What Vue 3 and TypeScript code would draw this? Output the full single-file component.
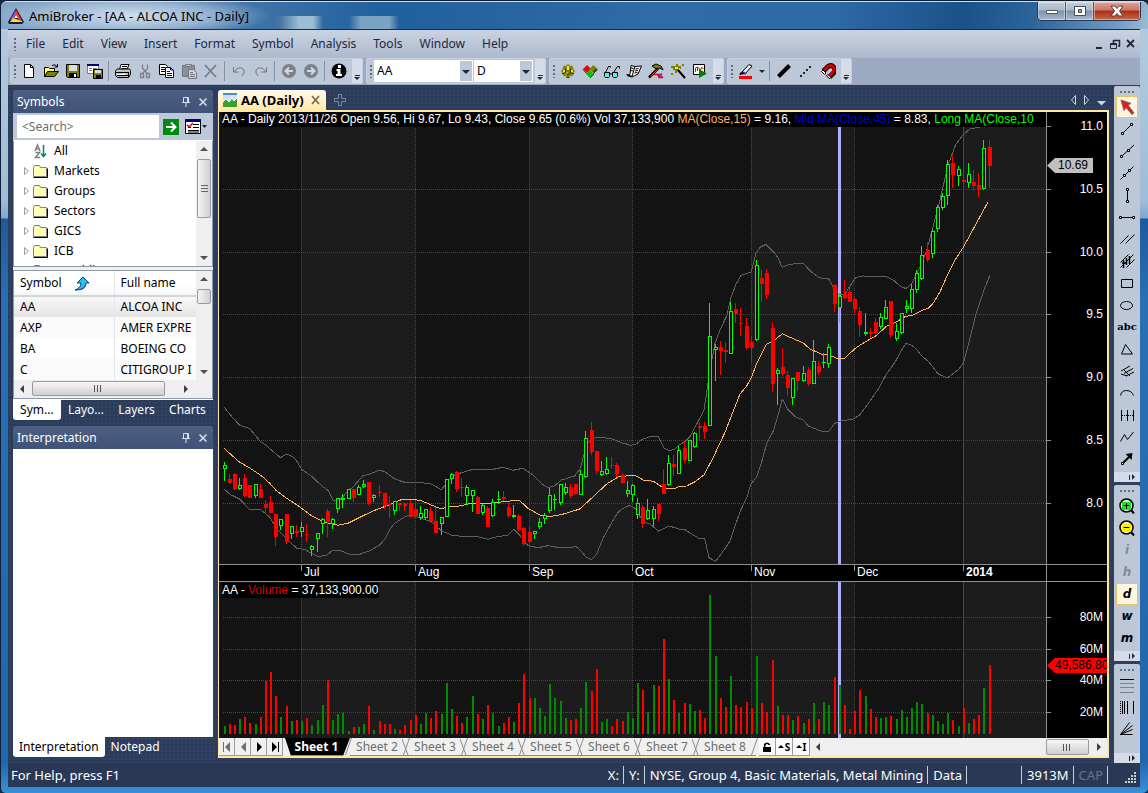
<script setup lang="ts">
import { ref } from 'vue'

interface Shape { d: string; f?: string; s?: string; w?: number; dash?: string }
interface Candle { x: number; up: boolean; hi: number; top: number; bot: number; lo: number }

const K = '#000'
const O = '#808000'
const GY = '#7d8088'

const icons: Record<string, Shape[]> = {
  new: [{ d: 'M3.5 1.5h6l3 3v10h-9z', f: '#fff', s: K }, { d: 'M9.5 1.5v3h3', s: K }],
  open: [{ d: 'M1.5 13.5v-9h4l1 1h5v3', f: '#ffff80', s: K }, { d: 'M1.5 13.5l3-5h11l-4 5z', f: O, s: K }, { d: 'M9 2.5q3-2 5 1M14.500 1v3h-3', s: K }],
  save: [{ d: 'M1.5 1.5h13v13h-12l-1-1z', f: O, s: K }, { d: 'M4 2h8v6h-8z', f: '#d8dde6' }, { d: 'M4 10h8v4h-8z', f: K }, { d: 'M9 11h2v3h-2z', f: '#fff' }],
  saveall: [{ d: 'M.5 1.500h11v9h-11z', f: '#fff', s: GY }, { d: 'M0 1h12v2h-12z', f: '#000080' }, { d: 'M2 5.500h3M2 7.500h3M6 5.500h4', s: GY }, { d: 'M6.500 6.500h9v9h-9z', f: O, s: K }, { d: 'M8 7h6v3h-6z', f: '#d8dde6' }, { d: 'M9 12h5v3h-5z', f: K }],
  print: [{ d: 'M4.500 6.500l1.500-5h8l-2 5z', f: '#fff', s: K }, { d: 'M7 3.500h5M6.500 5.500h5', s: K }, { d: 'M.5 7.500l2-1.500h12l1 1.500v4l-2 3h-11l-2-2z', f: '#c0c0c0', s: K }, { d: 'M1 9.500h12M2 12.500h11M13.500 9v5', s: K }, { d: 'M8 10.500h3', s: '#ffff00' }, { d: 'M2 11.500h8', s: '#fff' }],
  cut: [{ d: 'M5.500 1.500v4l5 5M10.500 1.500v4l-5 5', s: GY, w: 1.3 }, { d: 'M3.500 10.500h3v4h-3zM9.500 10.500h3v4h-3z', s: GY, w: 1.3 }],
  copy: [{ d: 'M.5 1.500h6l2 2v8h-8z', f: '#fff', s: K }, { d: 'M2 4.500h4M2 6.500h4M2 8.500h4', s: K }, { d: 'M6.500 4.500h5l3 3v7h-8z', f: '#fff', s: '#000080' }, { d: 'M8 8.500h3M8 10.500h5M8 12.500h5M11.500 4v3h3', s: '#000080' }],
  paste: [{ d: 'M1.500 2.500h12v11h-12z', f: '#8b9099', s: '#70757e' }, { d: 'M4.500 3.500v-2h6v2z', f: '#bcc7d8', s: '#70757e' }, { d: 'M7.500 6.500h5l3 3v6h-8z', f: '#ccd4e0', s: '#70757e' }, { d: 'M9 9.500h3M9 11.500h5M9 13.500h5', s: '#70757e' }],
  del: [{ d: 'M2 2l11 12M13 2l-11 12', s: '#777c85', w: 1.8 }],
  undo: [{ d: 'M2.500 4v5h5M3 8.500l4-3.500h4l2 2v3l-2 3', s: '#72777f' }],
  redo: [{ d: 'M13.500 4v5h-5M13 8.500l-4-3.500h-4l-2 2v3l2 3', s: '#72777f' }],
  back: [{ d: 'M1 8a7 7 0 1 0 14 0a7 7 0 1 0-14 0', f: '#7c8189' }, { d: 'M12 8h-7M8 4.500l-3.500 3.500l3.500 3.500', s: '#d2d9e4', w: 2 }],
  fwd: [{ d: 'M1 8a7 7 0 1 0 14 0a7 7 0 1 0-14 0', f: '#7c8189' }, { d: 'M4 8h7M8 4.500l3.500 3.500l-3.500 3.500', s: '#d2d9e4', w: 2 }],
  info: [{ d: 'M.5 8a7.500 7.500 0 1 0 15 0a7.500 7.500 0 1 0-15 0', f: K }, { d: 'M7 2h3v3h-3zM5.500 6h4v5h1.500v2h-6v-2h1.500v-3h-1z', f: '#fff' }],
  gear: [{ d: 'M6.500 1.500h3v2l2-1 2 2-1 2h2v3h-2l1 2-2 2-2-1v2h-3v-2l-2 1-2-2 1-2h-2v-3h2l-1-2 2-2 2 1z', f: O }, { d: 'M7 3h2v4h-2zM3 7h3v2h-3zM10 7h3v2h-3zM5 11l2-2 1 1-2 2z', f: '#f0e840' }, { d: 'M2 10.500h2M12 10.500h2M6.500 14.500h3M5.500 6v4l2 1.500h1l2-1.500v-4', s: '#303000' }],
  blocks: [{ d: 'M5 2l4 4l-4 4l-4-4z', f: '#f00000' }, { d: 'M11.500 2l4 4l-4 4l-4-4z', f: O }, { d: 'M8 7l4 4l-4 4l-4-4z', f: '#00c800' }, { d: 'M1 6.500l3.500 4M11.500 10.500l4-4M8 15l4-4', s: '#303030' }, { d: 'M12 10l3-3.500-1-1-3 3z', f: '#404000' }],
  glasses: [{ d: 'M.5 9.500h5v4l-1 1h-3l-1-1zM8.500 9.500h5v4l-1 1h-3l-1-1z', f: '#60e8f0', s: K }, { d: 'M5.500 11.500q1.500-2 3 0M1.500 9.500l3-6h2v1M9.500 9.500l4-6h2v2', s: K }],
  news: [{ d: 'M5 2.500l4 1 6.500-.5-3.500 8-6 3-5-1.500 3-1z', f: '#fff', s: K }, { d: 'M9 3.500l-3 10M9.500 6l3-.5M9 8l3-.5M8.500 10l3-.5M5 5l2.500.5M4.500 7.500l2.500.5M.5 11.500l6 2', s: K }],
  hammer: [{ d: 'M4 3l4-2l5 2l2 4l-3-2l-3 1.500z', f: O, s: K }, { d: 'M10 5.500l-9 9', s: K, w: 2.500 }, { d: 'M9.500 6.500l-7 7', s: '#b04030' }, { d: 'M6 11.500h4l1 3h3M11 11l4 4', s: '#f00000', w: 1.500 }, { d: 'M14 10.500l-3 3', s: '#2040ff', w: 1.500 }],
  wand: [{ d: 'M7.500 6.500l7.500 8.500', s: K, w: 2 }, { d: 'M4 3h2v-2h2v2h3v2h-2v2h-2v3h-2v-3h-2v-2h-2v-2z', f: O }, { d: 'M5 4h3v2h-3z', f: '#f0e820' }, { d: 'M1 10h2v2h-2zM12 1h2v2h-2zM10 5h1v1h-1z', f: O }],
  chartplay: [{ d: 'M1.500 1.500h11v10h-11z', f: '#fff', s: K }, { d: 'M3.500 9v-4l2-1v4', s: '#008000' }, { d: 'M6.500 4.500l2 3 1-3 2 1', s: '#e00000' }, { d: 'M7 6l8 4.500l-8 4.500z', f: '#008000' }],
  pen: [{ d: 'M4 9l7-7.500l3 1.500l-7 8z', f: '#eef', s: K }, { d: 'M5 9l3 2', s: '#2040ff', w: 2 }, { d: 'M1.500 12q0-3 3-3l2 2z', f: K }, { d: 'M1 13h13v3h-13z', f: '#ff0000' }],
  thick: [{ d: 'M2.500 13.500l11-11', s: K, w: 4 }],
  dots: [{ d: 'M2 14h2v-2h-2zM5 11h2v-2h-2zM8 8h2v-2h-2zM11 5h2v-2h-2z', f: '#222' }],
  magnet: [{ d: 'M3.500 8l4-4q3.500-3 6 0t0 6l-4 4', s: K, w: 5 }, { d: 'M4 7.500l4-4q3-2 5 0t0 5.500l-4 4.500', s: '#d00000', w: 3 }, { d: 'M1.500 8.500l1.500-1.500 3 3-1.500 1.500zM6.500 13l1.500-1.500 3 3-1.500 1z', f: '#fff', s: K }],
}

const drawIcons: Record<string, Shape[]> = {
  pointer: [{ d: 'M2 1l10 3.500l-3 1.500l6 8l-2 1.500l-6-7l-2 3z', f: '#ff1010', s: '#6b6b6b' }],
  seg: [{ d: 'M4 12l8-8', s: K }, { d: 'M2.500 11.500h2v2h-2zM11.500 2.500h2v2h-2z', f: '#fff', s: K }],
  ray: [{ d: 'M3 13l12-11', s: K }, { d: 'M1.500 12.500h2v2h-2zM8.500 6.500h2v2h-2z', f: '#fff', s: K }],
  ext: [{ d: 'M1.500 14.500l13-13', s: K }, { d: 'M4.500 9.500h2v2h-2zM9.500 4.500h2v2h-2z', f: '#fff', s: K }],
  vert: [{ d: 'M8.500 3v11', s: K }, { d: 'M7.500 1.500h2v2h-2zM7.500 13.500h2v2h-2z', f: '#fff', s: K }],
  horz: [{ d: 'M2 8.500h13', s: K }, { d: 'M.5 7.500h2v2h-2zM13.500 7.500h2v2h-2z', f: '#fff', s: K }],
  para: [{ d: 'M1.500 12.500l8-8M6.500 12.500l9-9', s: K }],
  regr: [{ d: 'M1.500 9.500l8-8M1.500 14.500l13-13M7.500 14.500l8-8', s: K }, { d: 'M4.500 7v8M7.500 5v7M10.500 3v8M3 10h5', s: K, w: 1.500 }],
  rect: [{ d: 'M2.500 4.500h11v8h-11z', s: K }],
  oval: [{ d: 'M1.500 8.500a6 4 0 1 0 12 0a6 4 0 1 0-12 0', s: K }],
  abc: [],
  tri: [{ d: 'M6.500 3.500l-4 9.500h11z', s: K }],
  fork: [{ d: 'M2 8l9-5M5 10.500l9-5M7 13l8-4M4 6l7 7M2 11l6 2', s: K }],
  arc: [{ d: 'M1.500 10.500q1-5 6-5t7 5', s: K }],
  cycles: [{ d: 'M2.500 3v11M8.500 3v11M14.500 3v11', s: K }, { d: 'M3 8.500h12', s: K, dash: '1 1' }],
  zigzag: [{ d: 'M1.500 12.500l4-7 3 5 6-7.500', s: K }],
  arrow: [{ d: 'M4 12l6-6', s: K, w: 2 }, { d: 'M13.500 2l-1 7l-6-6z', f: K }, { d: 'M2.500 11.500h2v2h-2z', f: '#fff', s: K }],
  zoomin: [{ d: 'M1 7.500a6.500 6.500 0 1 0 13 0a6.500 6.500 0 1 0-13 0', f: '#e8ecf2', s: K, w: 1.500 }, { d: 'M3 4h9v8h-9z', f: '#20e020' }, { d: 'M4.500 7.500h6M7.500 5v6', s: K }, { d: 'M12 12l3 3.500', s: K, w: 2 }],
  zoomout: [{ d: 'M1 7.500a6.500 6.500 0 1 0 13 0a6.500 6.500 0 1 0-13 0', f: '#e8ecf2', s: K, w: 1.500 }, { d: 'M3 4h9v8h-9z', f: '#f8f000' }, { d: 'M4.500 7.500h6', s: K }, { d: 'M12 12l3 3.500', s: K, w: 2 }],
  levels: [{ d: 'M1 2.500h14', s: K }, { d: 'M1 6.500h14M1 10.500h14M1 15.500h14', s: GY }],
  fibtime: [{ d: 'M1.500 2v13', s: K, dash: '1 1' }, { d: 'M3.500 2v13M5.500 2v13M8.500 2v13M14.500 2v13', s: K }],
  fan: [{ d: 'M1.500 13.500l9-12M1.500 13.500l12-9M1.500 13.500l12-5M1.500 13.500h12', s: K }],
}

const menus = ['File', 'Edit', 'View', 'Insert', 'Format', 'Symbol', 'Analysis', 'Tools', 'Window', 'Help']
const mainTools = ['new', 'open', 'save', 'saveall', '|', 'print', 'cut', 'copy', 'paste', 'del', '|', 'undo', 'redo', '|', 'back', 'fwd', '|', 'info']
const anaTools = ['gear', 'blocks', 'glasses', 'news', 'hammer', 'wand', 'chartplay']
const drawTools = ['pointer', 'seg', 'ray', 'ext', 'vert', 'horz', 'para', 'regr', 'rect', 'oval', 'abc', 'tri', 'fork', 'arc', 'cycles', 'zigzag', 'arrow']
const intervals = ['i', 'h', 'd', 'w', 'm']
const fibTools = ['levels', 'fibtime', 'fan']
const tree = ['Markets', 'Groups', 'Sectors', 'GICS', 'ICB', 'Watchlists']
const symbols = [['AA', 'ALCOA INC'], ['AXP', 'AMER EXPRE'], ['BA', 'BOEING CO'], ['C', 'CITIGROUP I']]
const sheets = [2, 3, 4, 5, 6, 7, 8]

const symbol = ref('AA')
const interval = ref('D')
const search = ref('')

// direction, high, body top, body bottom, low; thirds of a unit below the base line
const firstHalf = `G216,226,236,272 R252,267,279,282 R249,252,297,300 G264,285,297,300 R252,264,318,321 R285,285,323,323
G282,282,318,324 R282,297,324,324 R330,342,354,368 R318,336,368,368 R372,372,440,467 G387,387,409,421 R372,372,455,461
G408,408,433,446 R405,423,428,441 G396,411,425,440 R402,432,434,455 G464,468,479,497 G430,430,446,486 G384,388,403,432
R357,363,396,441 G384,388,401,416 G324,324,356,368 G312,324,331,354 G297,297,328,328 R297,297,323,336 G285,291,314,314
G270,283,291,294 R276,276,339,345 G312,316,325,335 R284,305,308,322 R308,308,347,357 R318,342,346,384 G334,334,362,375
R339,339,346,363 R340,341,347,364 R330,339,380,382 R330,357,378,384 G348,369,383,389 G357,357,383,389 R352,363,394,396
R352,394,428,430 G380,381,401,436 G267,268,382,382 G249,252,268,282 R244,246,297,305 R264,291,293,322 G285,291,317,345
G300,300,317,365 R317,321,371,371 G342,345,368,374 R348,354,411,411 G328,336,377,380 G304,328,331,341 R304,320,326,332
R340,351,378,384 G345,374,381,383 R372,377,420,425 R411,414,461,468 R411,426,456,459 G423,423,433,447 G384,397,411,416
G369,376,387,401 G294,316,362,368 G312,327,331,360 G281,281,339,345 G279,292,308,315 R282,291,318,325 R282,282,311,315
G240,252,314,314 G124,144,260,265 R96,121,185,195 R183,183,243,252 G213,244,256,258 G200,237,251,254 R201,225,228,236
R218,225,252,261 R250,255,279,281 G273,301,311,321`
const secondHalf = `G732,736,765,785 G774,790,824,837 R794,801,851,863 G777,810,836,840 G797,808,836,858 R792,792,821,843
R687,732,762,762 G645,670,734,738 R645,672,681,708 G618,631,701,701 R607,624,660,669 G601,601,662,662 G576,580,620,623
R547,558,563,600 R546,558,576,597 G189,289,557,557 G313,322,331,423 R303,321,333,405 R306,330,335,369 G186,214,341,341
R190,207,222,249 R204,249,251,288 R234,258,323,330 R288,306,324,365 G60,76,299,303 R90,114,132,186 R88,99,165,177
R246,264,432,456 G384,391,401,495 R324,381,402,407 R393,405,444,468 G414,415,473,495 R396,396,423,453 G378,400,424,426
R381,390,432,437 G300,364,431,431 R363,378,396,405 G340,367,370,384 G312,322,371,384 R132,135,192,216 G165,169,203,249
R120,162,174,177 R144,156,185,186 R171,177,207,219 R201,213,255,291 G220,277,281,288 R264,276,281,294 R234,246,279,282
G219,232,262,267 G180,202,236,237 R183,183,285,294 G249,274,296,303 G219,220,278,282 G180,199,208,219 G132,148,206,218
G90,100,149,160 G18,46,116,119 R6,30,60,66 G-33,-27,41,54 G-105,-99,-33,-24 G-141,-132,-96,-90 G-240,-228,-132,-105
R-252,-231,-195,-156 G-222,-213,-192,-162 R-216,-180,-174,-150 G-231,-198,-171,-156 R-210,-174,-162,-147 R-200,-165,-150,-130
G-300,-276,-153,-150 R-300,-279,-222,-156`
const volumeTops = `453,447,450,432,426,444,447,426,318,291,363,426,393,438,435,438,429,450,435,390,315,435,417,414,468,456,456,447,393,465,438,447,447,462,465,450,435,420,447,414,429,408,417,324,402,423,444,426,363,417,432,390,414,453,444,426,441,384,297,369,369,399,423,327,369,378,429,435,432,399,321,348,282,441,432,453,432,438,411,429,324,345,411,330,333,192,312,375,414,384,387,408,405,429,60,243,369,396,303,390,396,381,399,243,384,411,255,393,420,420,435,423,444,432,384,432,381,390,306,330,390,462,408,345,363,402,426,429,426,423,432,405,426,399,381,387,414,420,438,447,414,435,453,399,444,432,420,339,270`

const barX = (i: number): number => Math.floor(224 + i * 5.1699)
function readCandles(text: string, base: number, start: number): Candle[] {
  return text.split(/\s+/).map((item, i) => {
    const v = item.slice(1).split(',').map(n => Math.round(base + Number(n) / 3))
    return { x: barX(start + i), up: item[0] === 'G', hi: v[0], top: v[1], bot: Math.max(v[2], v[1] + 1), lo: v[3] }
  })
}
const candles = [...readCandles(firstHalf, 390, 0), ...readCandles(secondHalf, 240, 79)]
const volumes = volumeTops.split(',').map((t, i) => ({ x: barX(i), y: Math.round(575 + Number(t) / 3), up: candles[i].up }))

function trace(left: string, right: string, tail: string): string {
  const conv = (s: string, ox: number, oy: number): string[] => s.split(' ').map(p => {
    const [x, y] = p.split(',').map(Number)
    return `${(ox + x / 3).toFixed(1)},${(oy + y / 3).toFixed(1)}`
  })
  return [...conv(left, 218, 390), ...conv(right, 630, 240), tail].join(' ')
}
const upper = trace(
  '18,51 40,78 65,106 95,116 128,155 143,165 187,203 205,192 222,199 236,213 252,239 280,258 313,289 330,301 345,330 365,330 390,303 405,291 435,257 455,252 485,240 502,246 530,267 565,279 600,277 640,282 670,299 700,262 730,248 765,238 825,238 855,232 885,241 915,235 945,255 975,284 990,293 1010,287 1030,270 1070,258 1087,236 1105,165 1125,145 1150,142 1180,146 1215,160 1230,163',
  '0,617 20,611 40,596 60,590 85,590 101,623 118,632 135,627 147,615 165,605 180,590 195,562 222,510 240,390 255,310 270,270 290,228 303,172 318,133 333,106 350,100 364,96 378,40 390,22 408,13 430,35 444,53 456,82 470,76 500,70 520,70 540,92 567,113 596,117 612,145 628,163 645,163 660,138 678,112 700,108 768,109 790,120 810,138 828,146 845,130 860,100 875,70 890,30',
  '932,231 940,200 948,165 956,144 963,135 970,129 980,127')
const lower = trace(
  '18,297 40,315 65,327 93,357 125,357 155,381 175,414 200,440 220,460 237,475 260,478 280,490 300,499 325,497 345,480 370,483 395,493 420,495 440,487 455,482 485,465 500,448 515,418 530,400 560,380 580,375 610,385 640,395 670,422 700,435 740,440 780,440 810,448 830,442 870,435 887,418 905,435 930,467 960,473 990,467 1030,474 1075,470 1087,480 1105,502 1120,509 1135,495 1155,445 1180,400 1200,367 1215,355 1230,349',
  '0,796 15,805 40,845 60,852 86,874 118,858 150,868 165,869 190,885 210,897 224,895 237,953 257,964 275,940 300,903 330,815 350,773 364,730 380,712 395,665 410,610 430,573 445,523 457,478 475,510 495,530 520,540 535,558 575,574 597,574 612,551 628,544 670,537 690,524 715,490 745,447 768,404 795,367 815,330 828,310 845,316 860,328 875,348 895,364 925,402 952,414 970,400 985,389 1000,370 1015,315 1040,215 1060,155',
  '990,275')
const average = trace(
  '18,175 65,217 95,234 130,257 155,280 175,302 205,324 240,347 280,377 310,392 330,399 360,406 390,400 435,377 470,361 515,344 550,329 580,327 610,332 640,345 670,357 690,350 720,349 755,341 800,342 840,337 903,330 930,355 965,375 990,380 1030,374 1085,357 1130,316 1165,283 1200,261 1225,258',
  '0,706 15,706 40,720 70,724 95,740 115,746 135,745 150,739 170,738 195,725 222,705 250,652 285,577 330,462 350,438 364,413 380,370 408,314 430,303 457,281 480,292 520,309 540,327 575,343 597,345 620,355 645,355 660,339 680,322 710,303 740,286 770,258 800,245 825,230 850,225 880,209 893,206 910,189 930,155 955,100 975,60 1000,22',
  '988,202')

const months = [
  { x: 301, w: 114, name: 'Jul', light: true }, { x: 415, w: 114, name: 'Aug', light: false },
  { x: 529, w: 103, name: 'Sep', light: true }, { x: 632, w: 119, name: 'Oct', light: false },
  { x: 751, w: 103, name: 'Nov', light: true }, { x: 854, w: 109, name: 'Dec', light: false },
  { x: 963, w: 83, name: '2014', light: true },
]
const priceLevels = [['11.0', 126], ['10.5', 189], ['10.0', 252], ['9.5', 314], ['9.0', 377], ['8.5', 440], ['8.0', 503]] as [string, number][]
const volumeLevels = [['80M', 617], ['60M', 649], ['40M', 680], ['20M', 712]] as [string, number][]
const pricePos = (y: number): string => ((y - 112) / 452 * 100).toFixed(3) + '%'
const volumePos = (y: number): string => ((y - 582) / 156 * 100).toFixed(3) + '%'
const monthPos = (x: number): string => ((x - 219) / 827 * 100).toFixed(3) + '%'
</script>

<template>
  <div class="window">
    <header class="titlebar">
      <svg class="logo" viewBox="0 0 16 16"><path d="M8 0l8 14-2 2H1l-1-2z" fill="#181840" /><path d="M8 2L2 12l3-1 4-6z" fill="#a050e8" /><path d="M8 2l6 11-4-2-3-6z" fill="#f04030" /><path d="M2 14l3-4 9 3v1z" fill="#f8e020" /><path d="M8 7l2 3H6z" fill="#e8f0ff" /></svg>
      <h1>AmiBroker - [AA - ALCOA INC - Daily]</h1>
      <div class="winbtns">
        <button aria-label="Minimize"><svg viewBox="0 0 14 14"><path d="M1.500 6.500h11v3h-11z" fill="#fff" stroke="#555b66" /></svg></button>
        <button aria-label="Maximize"><svg viewBox="0 0 14 14"><path d="M1.500 2.500h11v9h-11zM5.500 5.500v3h3v-3z" fill="#fff" fill-rule="evenodd" stroke="#454c5a" /></svg></button>
        <button class="close" aria-label="Close"><svg viewBox="0 0 14 14"><path d="M1 2h4l2 2.500L9 2h4L9.500 7l3.500 5H9L7 9.500 5 12H1l3.500-5z" fill="#fff" stroke="#5d3a3a" /></svg></button>
      </div>
    </header>

    <div class="client">
      <nav class="menubar">
        <i class="grip"></i>
        <button v-for="m in menus" :key="m">{{ m }}</button>
        <div class="mdi">
          <button aria-label="Minimize document"><svg viewBox="0 0 12 12"><path d="M3 9h6v2H3z" fill="#1b293e" /></svg></button>
          <button aria-label="Restore document"><svg viewBox="0 0 12 12"><path d="M4 2.500h6.500V8H9M4.500 2v3" fill="none" stroke="#1b293e" stroke-width="1.500" /><path d="M1.500 5.500h6v5h-6zM1 6.500h7" fill="none" stroke="#1b293e" /></svg></button>
          <button aria-label="Close document"><svg viewBox="0 0 12 12"><path d="M2 2l7 7M9 2L2 9" stroke="#1b293e" stroke-width="1.800" /></svg></button>
        </div>
      </nav>

      <div class="toolbars">
        <div class="bar">
          <i class="grip"></i>
          <template v-for="(t, n) in mainTools" :key="n">
            <i v-if="t === '|'" class="sep"></i>
            <button v-else class="tool" :aria-label="t"><svg viewBox="0 0 16 16"><path v-for="(p, k) in icons[t]" :key="k" :d="p.d" :fill="p.f || 'none'" :stroke="p.s || 'none'" :stroke-width="p.w || 1" :stroke-dasharray="p.dash" /></svg></button>
          </template>
          <button class="more" aria-label="More"></button>
        </div>
        <div class="bar">
          <i class="grip"></i>
          <label class="combo wide"><select v-model="symbol" aria-label="Symbol"><option>AA</option><option>AXP</option></select></label>
          <label class="combo"><select v-model="interval" aria-label="Interval"><option>D</option><option>W</option></select></label>
          <button class="more" aria-label="More"></button>
        </div>
        <div class="bar">
          <i class="grip"></i>
          <button v-for="t in anaTools" :key="t" class="tool" :aria-label="t"><svg viewBox="0 0 16 16"><path v-for="(p, k) in icons[t]" :key="k" :d="p.d" :fill="p.f || 'none'" :stroke="p.s || 'none'" :stroke-width="p.w || 1" :stroke-dasharray="p.dash" /></svg></button>
          <button class="more" aria-label="More"></button>
        </div>
        <div class="bar">
          <i class="grip"></i>
          <button class="tool" aria-label="Line color"><svg viewBox="0 0 16 16"><path v-for="(p, k) in icons.pen" :key="k" :d="p.d" :fill="p.f || 'none'" :stroke="p.s || 'none'" :stroke-width="p.w || 1" /></svg></button>
          <button class="dd" aria-label="Choose line color"></button>
          <i class="sep"></i>
          <button v-for="t in ['thick', 'dots', 'magnet']" :key="t" class="tool" :aria-label="t"><svg viewBox="0 0 16 16"><path v-for="(p, k) in icons[t]" :key="k" :d="p.d" :fill="p.f || 'none'" :stroke="p.s || 'none'" :stroke-width="p.w || 1" /></svg></button>
          <button class="more" aria-label="More"></button>
        </div>
      </div>

      <div class="body">
        <aside class="side">
          <section class="panel">
            <h2>Symbols<span class="pins"><button aria-label="Pin"><svg viewBox="0 0 10 12"><path d="M2.500 6.500v-5h5v5M1 6.500h8M5 7v4M6.500 2v4" fill="none" stroke="#d6dfec" /></svg></button><button aria-label="Close"><svg viewBox="0 0 10 12"><path d="M1.500 2.500l7 7M8.500 2.500l-7 7" stroke="#d6dfec" stroke-width="1.500" /></svg></button></span></h2>
            <div class="searchrow">
              <input v-model="search" type="text" placeholder="&lt;Search&gt;" aria-label="Search">
              <button class="go" aria-label="Go"><svg viewBox="0 0 16 16"><path d="M0 0h16v16H0z" fill="#008a10" /><path d="M3 8h10M8 3.500L12.500 8 8 12.500" fill="none" stroke="#fff" stroke-width="2" /></svg></button>
              <button class="opts" aria-label="Options"><svg viewBox="0 0 22 15"><path d="M.5.5h15v14H.5z" fill="#fff" stroke="#000" /><path d="M0 0h16v3H0z" fill="#000080" /><path d="M8 5.500h6M8 8.500h6M3 11.500h11M3 8.500h3M3 13h11" stroke="#000" /><path d="M2 6l2 2 4-4" fill="none" stroke="#e00000" stroke-width="1.500" /><path d="M17 6h5l-2.500 3z" fill="#1b293e" /></svg></button>
            </div>
            <div class="treebox">
              <ul class="tree">
                <li><svg class="az" viewBox="0 0 24 16"><path d="M11 8l2.500-6L16 8M12 6h3M11.500 9.500h4l-4 5h4.500" fill="none" stroke="#808080" stroke-width="1.500" /><path d="M19.500 2v11M17 10.500l2.500 3 2.500-3" fill="none" stroke="#008080" stroke-width="1.500" /></svg>All</li>
                <li v-for="t in tree" :key="t"><svg class="az" viewBox="0 0 24 16"><path d="M.5 4.500v7l4-3.500z" fill="#fff" stroke="#9a9a9a" /><path d="M9.500 13.500v-9l1-2h5l1 2h6v9z" fill="#ffffb4" stroke="#808080" /><path d="M9.500 14.500h14v-9" fill="none" stroke="#000" /></svg>{{ t }}</li>
              </ul>
              <div class="vscroll"><i class="up"></i><b class="thumb tall"></b><i class="down"></i></div>
            </div>
            <div class="listbox">
              <div class="listmain">
                <table>
                  <thead><tr><th scope="col">Symbol<svg viewBox="0 0 16 14"><path d="M9 0l6 6h-3q0 7-11 7 6-2 6-7H3z" fill="#20c8e8" stroke="#1030a0" /><path d="M1 13q8 0 10-5v2q-2 4-10 3z" fill="#6030e0" /></svg></th><th scope="col">Full name</th></tr></thead>
                  <tbody><tr v-for="(s, n) in symbols" :key="s[0]" :class="{ sel: n === 0, alt: n % 2 === 1 }"><td>{{ s[0] }}</td><td>{{ s[1] }}</td></tr></tbody>
                </table>
                <div class="vscroll"><i class="up"></i><b class="thumb"></b><i class="down"></i></div>
              </div>
              <div class="hscroll"><i class="left"></i><b class="thumb"></b><i class="right"></i></div>
            </div>
            <div class="sidetabs four"><button class="on">Sym...</button><button>Layo...</button><button>Layers</button><button>Charts</button></div>
          </section>
          <section class="panel interp">
            <h2>Interpretation<span class="pins"><button aria-label="Pin"><svg viewBox="0 0 10 12"><path d="M2.500 6.500v-5h5v5M1 6.500h8M5 7v4M6.500 2v4" fill="none" stroke="#d6dfec" /></svg></button><button aria-label="Close"><svg viewBox="0 0 10 12"><path d="M1.500 2.500l7 7M8.500 2.500l-7 7" stroke="#d6dfec" stroke-width="1.500" /></svg></button></span></h2>
            <div class="blank"></div>
            <div class="sidetabs"><button class="on">Interpretation</button><button>Notepad</button></div>
          </section>
        </aside>

        <main class="doc">
          <div class="doctabs">
            <div class="doctab"><svg class="tabicon" viewBox="0 0 14 14"><path d="M0 0h14v14H0z" fill="#cfe4f8" /><path d="M0 0h14v2H0z" fill="#4a8ad0" /><path d="M0 14V9l3-3 3 3 3-4 2 3 3-3v9z" fill="#3aa030" /><path d="M0 9l3-3 3 3 3-4 2 3 3-3" fill="none" stroke="#fff" /></svg>AA (Daily)<button aria-label="Close tab"><svg viewBox="0 0 10 10"><path d="M1 1l7 8M8 1L1 9" stroke="#75633d" stroke-width="1.500" /></svg></button></div>
            <button class="plus" aria-label="New tab"><svg viewBox="0 0 12 12"><path d="M4.500.5h3v4h4v3h-4v4h-3v-4h-4v-3h4z" fill="none" stroke="#7d8697" /></svg></button>
            <svg class="tabnav" viewBox="0 0 36 12"><path d="M5.500 1.500v9l-4-4.500zM14.500 1.500v9l4-4.500z" fill="none" stroke="#ccd5e4" /><path d="M27 7h9l-4.500 4.500z" fill="#ccd5e4" /></svg>
          </div>
          <div class="frame">
            <div class="pane price">
              <div class="plot">
                <svg viewBox="219 112 827 452" preserveAspectRatio="none" shape-rendering="crispEdges">
                  <rect x="219" y="112" width="827" height="452" fill="#131313" />
                  <rect v-for="m in months" :key="m.x" :x="m.x" y="112" :width="m.w" height="452" :fill="m.light ? '#1c1c1c' : '#131313'" />
                  <line v-for="p in priceLevels" :key="p[1]" x1="223" x2="1046" :y1="p[1] + 0.5" :y2="p[1] + 0.5" stroke="#484848" stroke-dasharray="1 1" />
                  <line v-for="m in months" :key="m.name" :x1="m.x + 0.5" :x2="m.x + 0.5" y1="112" y2="564" stroke="#484848" :stroke-dasharray="m.name === '2014' ? '' : '1 1'" />
                  <rect x="838" y="112" width="3" height="452" fill="#b0b0ff" />
                  <polyline :points="average" fill="none" stroke="#ffb366" />
                  <polyline :points="upper" fill="none" stroke="#606060" />
                  <polyline :points="lower" fill="none" stroke="#606060" />
                  <g v-for="c in candles" :key="c.x">
                    <rect :x="c.x" :y="c.hi" width="1" :height="c.lo - c.hi" :fill="c.up ? '#00ff00' : '#ff0000'" />
                    <rect :x="c.x - 1" :y="c.top" width="4" :height="c.bot - c.top" :fill="c.up ? '#00ff00' : '#ff0000'" />
                    <rect v-if="c.up && c.bot - c.top > 2" :x="c.x" :y="c.top + 1" width="2" :height="c.bot - c.top - 2" fill="#131313" />
                  </g>
                </svg>
                <p class="caption">AA - Daily 2013/11/26 Open 9.56, Hi 9.67, Lo 9.43, Close 9.65 (0.6%) Vol 37,133,900 <span class="c1">MA(Close,15)</span> = 9.16, <span class="c2">Mid MA(Close,45)</span> = 8.83, <span class="c3">Long MA(Close,10</span></p>
              </div>
              <div class="axis">
                <span v-for="p in priceLevels" :key="p[0]" :style="{ top: pricePos(p[1]) }">{{ p[0] }}</span>
                <b class="tag" :style="{ top: pricePos(165) }">10.69</b>
              </div>
            </div>
            <div class="dates">
              <div class="datescale"><span v-for="m in months" :key="m.name" :class="{ year: m.name === '2014' }" :style="{ left: monthPos(m.x) }">{{ m.name }}</span></div>
            </div>
            <div class="pane vol">
              <div class="plot">
                <svg viewBox="219 582 827 156" preserveAspectRatio="none" shape-rendering="crispEdges">
                  <rect x="219" y="582" width="827" height="156" fill="#131313" />
                  <rect v-for="m in months" :key="m.x" :x="m.x" y="582" :width="m.w" height="156" :fill="m.light ? '#1c1c1c' : '#131313'" />
                  <line v-for="p in volumeLevels" :key="p[1]" x1="223" x2="1046" :y1="p[1] + 0.5" :y2="p[1] + 0.5" stroke="#484848" stroke-dasharray="1 1" />
                  <line v-for="m in months" :key="m.name" :x1="m.x + 0.5" :x2="m.x + 0.5" y1="582" y2="738" stroke="#484848" :stroke-dasharray="m.name === '2014' ? '' : '1 1'" />
                  <rect x="838" y="582" width="3" height="156" fill="#b0b0ff" />
                  <rect v-for="v in volumes" :key="v.x" :x="v.x" :y="v.y" width="2" :height="734 - v.y" :fill="v.up ? '#008c00' : '#ff0000'" />
                </svg>
                <p class="caption">AA - <span class="c4">Volume</span> = 37,133,900.00</p>
              </div>
              <div class="axis">
                <span v-for="p in volumeLevels" :key="p[0]" :style="{ top: volumePos(p[1]) }">{{ p[0] }}</span>
                <b class="tag red" :style="{ top: volumePos(665) }">49,586,800</b>
              </div>
            </div>
            <div class="sheets">
              <button class="nav" aria-label="First sheet"><svg viewBox="0 0 16 16"><path d="M4 3h1v10H4zM11 3v10L6 8z" fill="#6d6d6d" /></svg></button>
              <button class="nav" aria-label="Previous sheet"><svg viewBox="0 0 16 16"><path d="M11 3v10L6 8z" fill="#6d6d6d" /></svg></button>
              <button class="nav" aria-label="Next sheet"><svg viewBox="0 0 16 16"><path d="M6 3v10l5-5z" fill="#000" /></svg></button>
              <button class="nav" aria-label="Last sheet"><svg viewBox="0 0 16 16"><path d="M5 3v10l5-5zM11 3h1v10h-1z" fill="#000" /></svg></button>
              <button class="sheet on">Sheet 1</button>
              <button v-for="s in sheets" :key="s" class="sheet"><svg viewBox="0 0 8 18" aria-hidden="true"><path d="M7.500 0L1.500 17" fill="none" stroke="#8a8a8a" /><path v-if="s > 2" d="M0 1l6 16" fill="none" stroke="#8a8a8a" /></svg>Sheet {{ s }}</button>
              <svg class="endslash" viewBox="0 0 8 18" aria-hidden="true"><path d="M6.500 0L.5 17" stroke="#8a8a8a" /></svg>
              <button class="nav small" aria-label="Lock"><svg viewBox="0 0 16 16"><path d="M4 8h8v5H4zM5 8V5q3-3 6 0v1h-1.500q-1.500-2-3 0v2z" fill="#000" /></svg></button>
              <button class="nav small">S</button>
              <button class="nav small">I</button>
              <div class="hscroll"><i class="left"></i><b class="thumb"></b><i class="right"></i></div>
            </div>
          </div>
        </main>

        <aside class="rails">
          <div class="rail">
            <i class="hgrip"></i>
            <button v-for="t in drawTools" :key="t" :class="{ on: t === 'pointer' }" :aria-label="t"><span v-if="t === 'abc'" class="abc">abc</span><svg v-else viewBox="0 0 16 16"><path v-for="(p, k) in drawIcons[t]" :key="k" :d="p.d" :fill="p.f || 'none'" :stroke="p.s || 'none'" :stroke-width="p.w || 1" :stroke-dasharray="p.dash" /></svg></button>
            <i class="end"></i>
          </div>
          <div class="rail">
            <i class="hgrip"></i>
            <button v-for="t in ['zoomin', 'zoomout']" :key="t" :aria-label="t"><svg viewBox="0 0 16 16"><path v-for="(p, k) in drawIcons[t]" :key="k" :d="p.d" :fill="p.f || 'none'" :stroke="p.s || 'none'" :stroke-width="p.w || 1" /></svg></button>
            <button v-for="t in intervals" :key="t" class="letter" :class="{ on: t === 'd', dim: t === 'i' || t === 'h' }">{{ t }}</button>
            <i class="end"></i>
          </div>
          <div class="rail last">
            <i class="hgrip"></i>
            <button v-for="t in fibTools" :key="t" :aria-label="t"><svg viewBox="0 0 16 16"><path v-for="(p, k) in drawIcons[t]" :key="k" :d="p.d" :fill="p.f || 'none'" :stroke="p.s || 'none'" :stroke-dasharray="p.dash" /></svg></button>
            <i class="end"></i>
          </div>
        </aside>
      </div>

      <footer class="status">
        <span class="help">For Help, press F1</span>
        <span>X:</span><span>Y:</span><span>NYSE, Group 4, Basic Materials, Metal Mining</span><span>Data</span><span class="gap"></span><span class="mem">3913M</span><span class="cap">CAP</span>
        <svg class="sizer" viewBox="0 0 12 12"><path d="M9 0h2v2H9zM6 3h2v2H6zM9 3h2v2H9zM3 6h2v2H3zM6 6h2v2H6zM9 6h2v2H9zM0 9h2v2H0zM3 9h2v2H3zM6 9h2v2H6zM9 9h2v2H9z" fill="#c5cedd" /></svg>
      </footer>
    </div>
  </div>
</template>

<style>
body { background: #14283f; }
</style>

<style scoped>
* { box-sizing: border-box; }
button { border: 0; padding: 0; margin: 0; background: none; font: inherit; color: inherit; display: flex; align-items: center; justify-content: center; }
svg { display: block; flex: none; }
i, b { font-style: normal; display: block; flex: none; }
.window { height: 100vh; min-height: 760px; display: flex; flex-direction: column; font: 12px/16px "Noto Sans", "Open Sans", sans-serif; color: #000; border-radius: 7px 7px 5px 5px; overflow: hidden; padding: 0 8px 6px 7px; background: linear-gradient(180deg, #b5cce0 0, #9fbdd6 200px, #7fa8ca 217px, #1d5a9c 218px, #2a70b4 300px, #2066ae 760px, #3b92d6 793px); border-top: 1px solid #0e1c30; border-left: 1px solid #10203a; }
.titlebar { height: 28px; flex: none; margin: 0 -8px 0 -7px; padding: 0 7px 0 7px; display: flex; align-items: center; border-top: 1px solid #cfe0f0;
  background: radial-gradient(ellipse 140px 22px at 130px 14px, rgba(222, 232, 242, .9), rgba(190, 210, 230, .6) 60%, transparent), linear-gradient(90deg, transparent 0, transparent 272px, #4a78a4 280px, #9dbdd6 298px, #9dbdd6 312px, transparent 322px, transparent 348px, #7da3c4 360px, #7da3c4 388px, transparent 398px) no-repeat 0 14px, linear-gradient(100deg, #86a6c4 0, #3f74a8 250px, #20609c 380px, #2f6ba5 640px, #2e6aa6 820px, #1b5189 950px, #2c649c 1020px, #6f98c0 1100px, #9dbbd6 100%); }
.logo { width: 16px; height: 16px; margin-right: 5px; }
h1 { margin: 0; font-size: 13px; font-weight: 400; line-height: 16px; white-space: nowrap; }
.winbtns { margin-left: auto; align-self: flex-start; display: flex; height: 19px; border: 1px solid #26384f; border-top: 0; border-radius: 0 0 5px 5px; overflow: hidden; }
.winbtns button { width: 28px; background: linear-gradient(#c3ced9, #a9b8c8 45%, #7c91a8 50%, #a9bccd); border-right: 1px solid #45576e; box-shadow: inset 0 0 0 1px rgba(255, 255, 255, .4); }
.winbtns .close { width: 46px; border-right: 0; background: linear-gradient(#dda59b, #cb7464 45%, #a92d16 50%, #c86845); }
.winbtns svg { width: 14px; height: 14px; }
.client { flex: 1; min-height: 0; display: flex; flex-direction: column; background: #2d3c5c; border-top: 1px solid #1c2b40; }
.menubar { height: 28px; flex: none; display: flex; align-items: center; padding: 0 3px 0 1px; color: #1b293e; background: linear-gradient(#cad3e2, #aeb9cd); }
.menubar > button { padding: 0 8px 0 9px; height: 22px; }
.grip { width: 7px; height: 14px; background: radial-gradient(circle, #5f6e86 1px, transparent 1px) 2px 0 / 4px 4px repeat-y; }
.menubar .grip { width: 8px; background-position: 4px 0; }
.mdi { margin-left: auto; display: flex; gap: 4px; }
.mdi button { width: 12px; }
.mdi svg { width: 12px; height: 12px; }
.toolbars { height: 27px; flex: none; display: flex; gap: 3px; padding: 0 2px 1px; background: #9caac1; align-items: stretch; }
.bar { display: flex; align-items: center; background: #bcc7d8; border: 1px solid #c7d0df; border-radius: 2px; overflow: hidden; }
.tool { width: 22px; height: 22px; }
.tool svg { width: 16px; height: 16px; }
.sep { width: 6px; height: 20px; background: linear-gradient(#8591a3, #8591a3) 2px 0 / 1px 100% no-repeat; }
.more { width: 10px; align-self: stretch; margin-left: 2px; background: linear-gradient(#1b293e, #1b293e) 3px 16px / 5px 1px no-repeat, #d5dce8; align-items: flex-end; }
.more::after { content: ""; border: 3px solid transparent; border-top-color: #1b293e; border-bottom: 0; margin-bottom: 3px; }
.dd { width: 10px; height: 20px; }
.dd::after { content: ""; border: 3px solid transparent; border-top-color: #1b293e; border-bottom: 0; }
.combo { position: relative; width: 59px; height: 22px; background: #fff; }
.combo.wide { width: 99px; margin-right: 1px; }
.combo::before { content: ""; position: absolute; right: 1px; top: 1px; width: 12px; height: 20px; background: #bcc7d8; }
.combo::after { content: ""; position: absolute; right: 3px; top: 10px; border: 4px solid transparent; border-top-color: #1b293e; border-bottom: 0; pointer-events: none; }
.combo select { appearance: none; border: 0; outline: 0; background: none; width: 100%; height: 100%; font: inherit; color: #000; padding: 0 14px 0 3px; }
.body { flex: 1; min-height: 0; display: grid; grid-template-columns: 200px minmax(0, 1fr) 26px; gap: 5px; padding-left: 5px; background: radial-gradient(circle, #324364 1px, transparent 1px) 0 0 / 4px 4px, #2c3c5b; }
.side { display: flex; flex-direction: column; padding: 5px 0 6px; gap: 6px; min-height: 0; }
.panel { display: flex; flex-direction: column; min-height: 0; }
.interp { flex: 1; }
h2 { margin: 0; height: 23px; flex: none; font-size: 12px; font-weight: 400; color: #fff; display: flex; align-items: center; padding: 1px 5px 0 4px; background: linear-gradient(#4d6082, #3f5277); border-radius: 3px 3px 0 0; }
.pins { margin-left: auto; display: flex; gap: 7px; }
.pins svg { width: 10px; height: 12px; }
.searchrow { height: 27px; flex: none; display: flex; align-items: center; background: #bcc7d8; padding: 0 6px 0 4px; gap: 4px; }
.searchrow input { flex: 1; min-width: 0; height: 23px; border: 0; outline: 0; font: inherit; padding: 0 5px; background: #fff; }
.searchrow input::placeholder { color: #6d6d6d; opacity: 1; }
.go svg { width: 16px; height: 16px; }
.opts { margin-left: 2px; }
.opts svg { width: 22px; height: 15px; }
.treebox { height: 127px; display: flex; background: #fff; border: 1px solid #8f98a6; border-top-color: #fff; overflow: hidden; }
.tree { list-style: none; margin: 0; padding: 0 0 0 10px; flex: 1; }
.tree li { height: 20px; display: flex; align-items: center; gap: 6px; }
.az { width: 24px; height: 16px; }
.vscroll { width: 16px; flex: none; background: #efefef; display: flex; flex-direction: column; align-items: center; }
.up, .down { width: 16px; height: 16px; display: flex; align-items: center; justify-content: center; }
.down { margin-top: auto; }
.up::after, .down::after { content: ""; border: 4px solid transparent; border-bottom-color: #505050; border-top: 0; }
.down::after { border: 4px solid transparent; border-top-color: #505050; border-bottom: 0; }
.thumb { width: 14px; height: 15px; margin-top: 2px; border: 1px solid #9a9a9a; border-radius: 2px; background: linear-gradient(90deg, #f5f5f5, #d0d0d4); }
.thumb.tall { height: 59px; background: repeating-linear-gradient(#666 0 1px, transparent 1px 3px) 3px 25px / 7px 8px no-repeat, linear-gradient(90deg, #f5f5f5, #d0d0d4); }
.listbox { height: 129px; margin-top: 3px; background: #f0f0f0; border: 1px solid #8f98a6; overflow: hidden; box-shadow: 0 -3px 0 #f0f0f0; }
.listmain { height: 109px; display: flex; overflow: hidden; background: #fff; }
table { flex: 1; min-width: 0; width: 0; height: 109px; table-layout: fixed; border-collapse: collapse; }
th, td { height: 21px; padding: 0 0 0 6px; text-align: left; font-weight: 400; white-space: nowrap; overflow: hidden; border-right: 1px solid #e4e7ee; }
th:first-child { width: 100px; }
th:last-child, td:last-child { border-right: 0; }
th { height: 25px; border-bottom: 2px solid #d5d5d5; background: linear-gradient(#fff 50%, #f6f7f8); }
th svg { width: 16px; height: 14px; display: inline-block; vertical-align: middle; margin-left: 12px; }
.sel td { background: linear-gradient(#f8f8f8, #e4e4e4); }
.alt td { background: #fafafa; }
.hscroll { height: 18px; display: flex; align-items: center; background: #efefef; }
.listbox .hscroll { height: 17px; }
.left, .right { width: 16px; height: 16px; display: flex; align-items: center; justify-content: center; }
.left::after { content: ""; border: 4px solid transparent; border-right-color: #404040; border-left: 0; }
.right { margin-left: auto; }
.right::after { content: ""; border: 4px solid transparent; border-left-color: #404040; border-right: 0; }
.hscroll .thumb { width: 133px; height: 15px; margin: 0 0 0 2px; background: repeating-linear-gradient(90deg, #555 0 1px, transparent 1px 3px) 50% 50% / 9px 7px no-repeat, linear-gradient(#f7f7f7, #cfcfd2); }
.listbox .right { margin-right: 18px; }
.sidetabs { flex: none; display: flex; color: #fff; height: 21px; border-top: 1px solid #fff; }
.sidetabs button { padding: 0 6px; height: 20px; }
.sidetabs .on { background: #fff; color: #000; border-radius: 0 0 3px 3px; }
.sidetabs.four button { flex: 1 0 auto; padding: 0 6px; }
.blank { flex: 1; background: #fff; }
.doc { display: flex; flex-direction: column; padding: 5px 0; min-width: 0; min-height: 0; }
.doctabs { height: 20px; flex: none; display: flex; align-items: center; }
.doctab { height: 20px; display: flex; align-items: center; padding: 0 5px; font-size: 13px; font-weight: 700; background: linear-gradient(#fffaf0, #ffe8a6); border-radius: 3px 3px 0 0; white-space: nowrap; }
.tabicon { width: 14px; height: 14px; margin-right: 4px; }
.doctab button svg { width: 10px; height: 10px; margin-left: 7px; }
.plus { margin-left: 8px; }
.plus svg { width: 12px; height: 12px; }
.tabnav { width: 36px; height: 12px; margin-left: auto; margin-right: 3px; }
.frame { flex: 1; min-height: 0; display: flex; flex-direction: column; border: solid #ffe8a6; border-width: 2px 2px 2px 1px; background: #000; font-family: "Liberation Sans", Arial, sans-serif; color: #fff; }
.pane { display: grid; grid-template-columns: minmax(0, 1fr) 61px; min-height: 0; }
.price { flex: 1; }
.vol { height: 156px; flex: none; }
.plot { position: relative; min-height: 0; overflow: hidden; }
.plot svg { width: 100%; height: 100%; }
.caption { position: absolute; left: 3px; top: 0; margin: 0; padding-right: 1px; background: #000; font-size: 12px; line-height: 15px; white-space: nowrap; }
.price .caption { right: 0; }
.vol .caption { top: 1px; }
.c1 { color: #ffb366; } .c2 { color: #0000c8; } .c3 { color: #00ff00; } .c4 { color: #d80000; }
.axis { position: relative; border-left: 1px solid #909090; overflow: hidden; }
.axis span { position: absolute; right: 4px; line-height: 14px; margin-top: -7px; }
.axis span::before { content: ""; position: absolute; right: 52px; top: 7px; width: 5px; height: 1px; background: #909090; }
.tag { position: absolute; left: 0; height: 15px; margin-top: -7px; width: 46px; padding-left: 11px; font-weight: 400; line-height: 15px; color: #000; background: #c0c0c0; clip-path: polygon(0 50%, 8px 0, 100% 0, 100% 100%, 8px 100%); }
.tag.red { width: 64px; padding-left: 8px; background: #f00; }
.axis .tag { white-space: nowrap; }
.dates { height: 18px; flex: none; border: solid #909090; border-width: 1px 0; padding-right: 60px; background: #000; }
.datescale { position: relative; height: 16px; border-right: 1px solid #909090; }
.datescale span { position: absolute; top: 0; padding-left: 3px; line-height: 15px; }
.datescale span::before { content: ""; position: absolute; left: 0; top: 0; width: 1px; height: 6px; background: #909090; }
.datescale .year { font-weight: 700; }
.sheets { height: 18px; flex: none; display: flex; align-items: stretch; background: #f0f0f0; color: #6d6d6d; font-family: "Noto Sans", sans-serif; overflow: hidden; }
.nav { width: 16px; flex: none; border-right: 1px solid #9b9b9b; border-bottom: 1px solid #9b9b9b; }
.nav svg { width: 16px; height: 16px; }
.sheet { width: 58px; flex: none; position: relative; padding-right: 4px; white-space: nowrap; border-bottom: 1px solid #8a8a8a; }
.sheet svg { position: absolute; left: -6px; top: 0; width: 8px; height: 18px; }
.sheet.on { width: 67px; background: #000; color: #fff; font-weight: 700; clip-path: polygon(2px 0, 100% 0, calc(100% - 7px) 100%, 8px 100%); padding: 0; }
.endslash { width: 8px; height: 18px; margin-left: -5px; }
.small { width: 17px; background: #fafafa; color: #000; font-size: 10px; font-weight: 700; }
.small:not([aria-label])::before { content: ""; border: 3px solid transparent; border-bottom-color: #000; border-top: 0; margin-right: 1px; }
.sheets .hscroll { flex: 1; }
.sheets .hscroll .thumb { width: 43px; margin-left: auto; height: 16px; }
.sheets .hscroll .right { margin-left: 2px; }
.rails { display: flex; flex-direction: column; gap: 3px; padding-top: 1px; }
.rail { background: #bcc7d8; display: flex; flex-direction: column; align-items: center; border-radius: 2px; }
.rail button { width: 22px; height: 22px; border: 1px solid transparent; }
.rail button.on { background: #fff6e0; border-color: #e5c365; }
.rail svg { width: 16px; height: 16px; }
.hgrip { width: 16px; height: 10px; background: radial-gradient(circle, #5f6e86 1px, transparent 1px) 0 4px / 4px 4px repeat-x; }
.end { width: 26px; height: 10px; margin-top: 2px; background: linear-gradient(#1b293e, #1b293e) 15px 3px / 1px 5px no-repeat, #d5dce8; display: flex; align-items: center; }
.end::after { content: ""; border: 3px solid transparent; border-left-color: #1b293e; border-right: 0; margin-left: 18px; }
.last { flex: 1; }
.last .end { margin-top: auto; }
.abc { font: 700 10px/14px "DejaVu Serif", serif; }
.rail .letter { font: italic 700 12px/16px "DejaVu Sans", sans-serif; }
.rail .dim { color: #858b95; }
.status { height: 24px; flex: none; display: flex; align-items: center; font-size: 13px; color: #fff; padding: 0 3px; background: #293955; white-space: nowrap; }
.help { margin-right: auto; }
.status span:not(.help) { height: 18px; line-height: 18px; padding: 0 4px 0 5px; border-right: 1px solid #c5cedd; }
.status .gap { width: 55px; }
.status .mem { padding: 0 7px 0 8px; }
.status .cap { color: #66728a; }
.sizer { width: 12px; height: 12px; margin-left: 17px; align-self: flex-end; margin-bottom: 3px; }
</style>
